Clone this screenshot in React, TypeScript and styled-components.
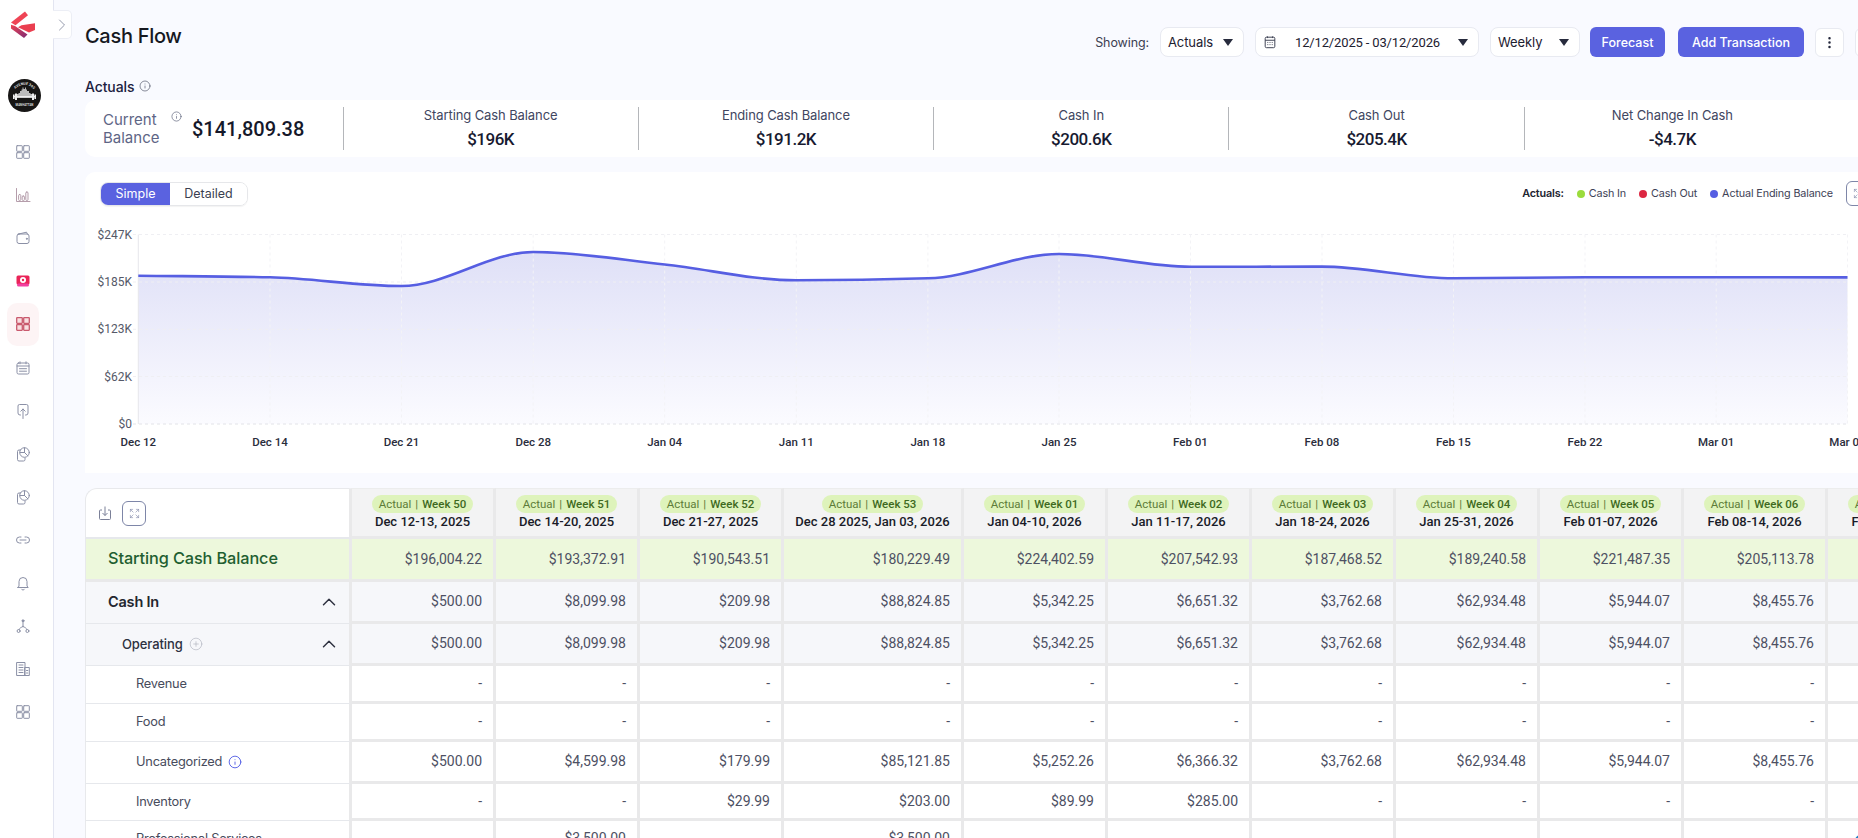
import React from "react";
import styled, { createGlobalStyle } from "styled-components";
import { ChevronRight, ChevronUp, Expand, Info, CirclePlus, EllipsisVertical } from "lucide-react";

const Global = createGlobalStyle`
  html, body { margin: 0; padding: 0; height: 100%; overflow: hidden; background: #f9faff; }
  * { box-sizing: border-box; }
  body { font-family: Inter, "Liberation Sans", sans-serif; color: #1a1d2e; }
`;
const NUM = `Roboto, Inter, sans-serif`;

const Shell = styled.div`
  position: relative; display: flex; width: 1858px; height: 838px; overflow: hidden;
`;
const Side = styled.aside`
  flex: 0 0 54px; height: 100%; background: #fff; border-right: 1px solid #e3e5f1;
  display: flex; flex-direction: column; align-items: center; padding-left: 0;
`;
const LogoBox = styled.div`
  width: 53px; height: 79px; flex: none;
`;
const AvatarBox = styled.div`
  width: 53px; height: 51.5px; flex: none; display: flex; justify-content: flex-start; padding-left: 8px;
`;
const NavList = styled.nav`
  display: flex; flex-direction: column; width: 100%; margin-top: 0;
`;
const NavItem = styled.div<{ $active?: boolean }>`
  width: 32px; height: 43.1px; flex: none; margin-left: 7px; display: flex; align-items: center; justify-content: center;
  border-radius: 10px; background: ${(p) => (p.$active ? "#fdf4f5" : "transparent")};
`;
const Toggle = styled.div`
  position: absolute; left: 53px; top: 10px; width: 19px; height: 29px; background: #fff;
  border: 1px solid #eceef5; border-left: none; border-radius: 0 5px 5px 0;
  display: flex; align-items: center; justify-content: center; color: #8a8fa3;
  svg { flex: none; }
`;
const Main = styled.main`
  flex: none; width: 1830px; padding-left: 31px; display: flex; flex-direction: column;
  & > * { flex: none; }
`;
const Header = styled.header`
  display: flex; justify-content: space-between; align-items: flex-start; padding-top: 27px; width: 1799px;
`;
const Title = styled.h1`
  margin: 0; font-size: 20px; line-height: 18px; font-weight: 500; letter-spacing: -0.3px; color: #16181f;
`;
const Tools = styled.div`
  display: flex; align-items: center; gap: 11px;
`;
const ShowLabel = styled.span`
  font-size: 12.5px; color: #3c4052; letter-spacing: -0.1px;
`;
const Select = styled.div<{ $w: number }>`
  width: ${(p) => p.$w}px; height: 30px; background: #fff; border: 1px solid #e8eaf1; border-radius: 8px;
  display: flex; align-items: center; justify-content: space-between; padding: 0 10px 0 7px;
  font-size: 13px; color: #1d2030; letter-spacing: -0.1px;
`;
const DateText = styled.span`
  font-family: ${NUM}; font-size: 13px; letter-spacing: -0.15px;
`;
const Caret = styled.i`
  display: block; width: 0; height: 0; border-left: 5.5px solid transparent; border-right: 5.5px solid transparent;
  border-top: 7px solid #272b3d;
`;
const Primary = styled.button<{ $w: number; $tweak?: boolean }>`
  width: ${(p) => p.$w}px; height: 30px; border: none; border-radius: 6px; background: #5a62e0; color: #fff;
  font: 500 12.5px Inter, sans-serif; padding: 0;
  margin: ${(p) => (p.$tweak ? "0 2px 0 -1px" : "0")};
`;
const IconBtn = styled.div`
  width: 29px; height: 29px; background: #fff; border: 1px solid #e8eaf1; border-radius: 6px;
  display: flex; align-items: center; justify-content: center; color: #22263a;
`;
const SectionLabel = styled.div`
  display: flex; align-items: center; gap: 5px; height: 20px; margin-top: 19px; margin-bottom: 4px;
  font-size: 14px; font-weight: 500; color: #1c2140; letter-spacing: -0.1px;
`;
const Summary = styled.section`
  display: flex; align-items: center; height: 57px; width: 1799px; background: #fff; border-radius: 10px;
`;
const CurrentCell = styled.div`
  flex: 0 0 258.5px; height: 43px; display: flex; align-items: center; padding-left: 18px;
  border-right: 1px solid #b4b6ba;
`;
const CurrentLabel = styled.div`
  width: 68px; font-size: 15px; line-height: 18px; color: #5e6585;
`;
const CurrentInfo = styled.div`
  align-self: flex-start; margin-top: 4px; width: 21px; color: #555b74; display: flex;
`;
const CurrentValue = styled.div`
  font-family: ${NUM}; font-size: 20px; font-weight: 500; color: #15182a;
`;
const StatCell = styled.div<{ $last?: boolean }>`
  flex: 0 0 295.3px; height: 43px; display: flex; flex-direction: column; align-items: center;
  border-right: ${(p) => (p.$last ? "none" : "1px solid #b4b6ba")};
`;
const StatLabel = styled.div`
  font-size: 13px; line-height: 16px; margin-top: 0; color: #41465f; letter-spacing: -0.1px;
`;
const StatValue = styled.div`
  font-family: ${NUM}; font-size: 17px; font-weight: 500; line-height: 20px; margin-top: 6px; color: #171a30;
  letter-spacing: -0.5px;
`;
const ChartCard = styled.section`
  margin-top: 15px; width: 1799px; height: 301px; background: #fff; border-radius: 10px 0 0 0;
  display: flex; flex-direction: column;
`;
const ChartTop = styled.div`
  display: flex; justify-content: space-between; align-items: center; height: 24px; margin-top: 9.5px;
  padding: 0 14px 0 15px; flex: none;
`;
const Segment = styled.div`
  display: flex; height: 24px; width: 148px; border: 1px solid #e6e7ea; border-radius: 8px; overflow: hidden;
  box-shadow: 0 1px 1px rgba(0,0,0,.05);
`;
const SegBtn = styled.div<{ $on?: boolean; $w: number }>`
  width: ${(p) => p.$w}px; display: flex; align-items: center; justify-content: center; font-size: 12.5px;
  background: ${(p) => (p.$on ? "#5a62e0" : "#fff")}; color: ${(p) => (p.$on ? "#fff" : "#3b3f50")};
`;
const Legend = styled.div`
  display: flex; align-items: center; font-size: 10.8px; color: #3e4256; letter-spacing: -0.15px;
`;
const LegendTitle = styled.span`
  font-weight: 600; color: #20232f; margin-right: 13px;
`;
const LegendItem = styled.span<{ $c: string }>`
  display: flex; align-items: center; margin-right: 13px;
  &::before { content: ""; width: 8px; height: 8px; border-radius: 50%; background: ${(p) => p.$c}; margin-right: 4px; }
`;
const OutlineBtn = styled.div`
  width: 24px; height: 25px; border: 1px solid #7e86a8; border-radius: 6px; display: flex; align-items: center;
  justify-content: center; color: #7e86a8; background: #fff; flex: none;
`;
const ChartSvg = styled.svg`
  display: block; margin-top: 19.5px; flex: none;
`;
const Table = styled.section`
  margin-top: 15px; width: 1900px; display: flex; flex-direction: column;
`;
const Row = styled.div<{ $h: number }>`
  display: flex; height: ${(p) => p.$h}px; flex: none;
`;
type Kind = "head" | "start" | "group" | "plain";
const labelBg = { head: "#fff", start: "#edf8dc", group: "#f6f7fa", plain: "#fff" };
const valueBg = { head: "#f3f3f4", start: "#edf8dc", group: "#f6f7fa", plain: "#fff" };
const Label = styled.div<{ $kind: Kind }>`
  flex: 0 0 267px; display: flex; align-items: center; background: ${(p) => labelBg[p.$kind]};
  border-left: 1px solid #e8e9ec; border-right: 3px solid #e9e9ea;
  border-bottom: ${(p) => (p.$kind === "start" ? "3px solid #e9e9ea" : "1px solid #e6e8ec")};
  ${(p) => p.$kind === "head" && "border-top: 1px solid #e8e9ec; border-top-left-radius: 12px; border-bottom-width: 2px; padding-left: 11px; gap: 9px;"}
  ${(p) => p.$kind !== "head" && "padding-bottom: 2px;"}
`;
const LabelText = styled.span<{ $lvl: number }>`
  padding-left: ${(p) => 22 + p.$lvl * 14}px; display: flex; align-items: center; gap: 6px; flex: 1;
  ${(p) =>
    p.$lvl === 0
      ? "font-size: 14.5px; font-weight: 600; color: #23262f; letter-spacing: -0.2px;"
      : p.$lvl === 1
      ? "font-size: 13px; font-weight: 500; color: #2c3040; letter-spacing: -0.1px;"
      : "font-size: 12.8px; color: #474b5c; letter-spacing: -0.22px;"}
`;
const StartText = styled.span`
  padding-left: 22px; font-size: 16.3px; font-weight: 500; color: #1f5f31; letter-spacing: -0.1px;
`;
const Chevron = styled.span`
  margin-right: 9px; display: flex; color: #2e3140;
`;
const Cell = styled.div<{ $kind: Kind; $wide?: boolean }>`
  flex: 0 0 ${(p) => (p.$wide ? 180 : 144)}px; display: flex; align-items: center; justify-content: flex-end;
  padding: 0 11px 1px 0; background: ${(p) => valueBg[p.$kind]};
  border-right: 3px solid #e9e9ea; border-bottom: 3px solid #e9e9ea;
  font-family: ${NUM}; font-size: 14px; color: #4d5063;
`;
const HeadCell = styled.div<{ $wide?: boolean }>`
  flex: 0 0 ${(p) => (p.$wide ? 180 : 144)}px; display: flex; flex-direction: column; align-items: center;
  padding-top: 6px; background: #f3f3f4; border-right: 3px solid #e9e9ea; border-bottom: 3px solid #e9e9ea;
  border-top: 1px solid #eceded;
`;
const Pill = styled.div`
  height: 18px; padding: 0 7px; border-radius: 9px; background: #def3bb; color: #5d7c38; font-family: ${NUM};
  font-size: 11.5px; display: flex; align-items: center; gap: 4px; white-space: nowrap;
  b { font-weight: 500; color: #3e6a1f; }
`;
const DateHead = styled.div`
  margin-top: 1px; font-family: ${NUM}; font-size: 13px; font-weight: 500; color: #191b28; white-space: nowrap;
`;
const Widget = styled.div`
  position: absolute; left: 1844px; top: 826px; width: 80px; height: 80px; border-radius: 50%;
  background: #1b7fc4; box-shadow: 0 0 12px rgba(255,255,255,.9);
`;

const S = { fill: "none", stroke: "#8b90a6", strokeWidth: 1, strokeLinecap: "round" as const, strokeLinejoin: "round" as const };
const Ico: React.FC<{ children: React.ReactNode; st?: any }> = ({ children, st }) => (
  <svg width="16" height="16" viewBox="0 0 16 16" {...S} {...st}>{children}</svg>
);
const grid = (
  <>
    <rect x="1.7" y="1.7" width="5.6" height="5.6" rx=".5" /><rect x="8.7" y="1.7" width="5.6" height="5.6" rx=".5" />
    <rect x="1.7" y="8.7" width="5.6" height="5.6" rx=".5" /><rect x="8.7" y="8.7" width="5.6" height="5.6" rx=".5" />
  </>
);
const filesIcon = (
  <Ico>
    <path d="M5.5 4H4A1.5 1.5 0 0 0 2.5 5.5v8A1.5 1.5 0 0 0 4 15h4.5A1.5 1.5 0 0 0 10 13.5V12" />
    <circle cx="9.5" cy="6.5" r="4.8" /><path d="M9.5 6.5V1.7M9.5 6.5l3.4 3.4M9.5 6.5H5" />
  </Ico>
);
const navIcons: React.ReactNode[] = [
  <Ico>{grid}</Ico>,
  <Ico st={{ stroke: "#b59dab" }}>
    <path d="M1.5 1.5V14.5H15" /><rect x="3.6" y="7.5" width="2.2" height="6" rx="1" /><rect x="7.2" y="9" width="2.2" height="4.5" rx="1" /><rect x="10.8" y="5" width="2.2" height="8.5" rx="1" />
  </Ico>,
  <Ico>
    <rect x="2" y="4" width="12" height="9.5" rx="2" /><path d="M3 4.2 11.5 2.2 12.5 4.2" /><circle cx="11.8" cy="8.8" r=".5" fill="#8b90a6" />
  </Ico>,
  <svg width="16" height="16" viewBox="0 0 16 16">
    <rect x="1.5" y="2.5" width="13" height="9" rx="1.5" fill="#ea2458" /><rect x="2" y="10.5" width="12" height="3" rx="1.5" fill="#f23fa0" />
    <circle cx="8" cy="7" r="3" fill="#fff" /><circle cx="8" cy="7" r="1.2" fill="#ea2458" />
  </svg>,
  <Ico st={{ stroke: "#c95a6e", strokeWidth: 1.3, fill: "#f8dfe1" }}>{grid}</Ico>,
  <Ico>
    <rect x="2" y="3" width="12" height="11" rx="1.5" /><path d="M5 1.8v2M11 1.8v2M2 6h12M4.5 8.7h7M4.5 11.2h7" />
  </Ico>,
  <Ico>
    <path d="M5.5 12H5a2 2 0 0 1-2-2V3a1.5 1.5 0 0 1 1.5-1.5h7A1.5 1.5 0 0 1 13 3v7a2 2 0 0 1-2 2h-.5" /><path d="M8 15.5V6M5.8 8.2 8 6l2.2 2.2" />
  </Ico>,
  filesIcon,
  filesIcon,
  <Ico>
    <path d="M6 5H4.5a3 3 0 0 0 0 6H6M10 5h1.5a3 3 0 0 1 0 6H10M5 8h6" />
  </Ico>,
  <Ico>
    <path d="M4 11V6.5a4 4 0 0 1 8 0V11l1.2 1.5H2.8Z" /><path d="M6.6 14.2a1.6 1.6 0 0 0 2.8 0" />
  </Ico>,
  <Ico>
    <circle cx="8" cy="2.8" r="1" fill="#8b90a6" /><circle cx="3.6" cy="13" r="1.5" /><circle cx="12.4" cy="13" r="1.5" /><path d="M8 3.5V8.5M8 8.5C6 9.5 4.5 10 4 11.6M8 8.5c2 1 3.5 1.5 4 3.1" />
  </Ico>,
  <Ico>
    <rect x="2" y="1.5" width="8" height="13" /><rect x="10" y="6.5" width="4.3" height="8" />
    <path d="M4 4h4M4 6.5h4M4 9h4M4 11.5h4M11.5 9.5h1.3M11.5 12h1.3" />
  </Ico>,
  <Ico>{grid}</Ico>,
];

const Logo = () => (
  <svg width="53" height="79" viewBox="0 0 53 79">
    <defs>
      <linearGradient id="lg" x1="0" y1="0" x2="1" y2="1"><stop offset="0" stopColor="#ee4353" /><stop offset="1" stopColor="#7d2a74" /></linearGradient>
    </defs>
    <polygon points="25,11.5 28,15.2 15.5,25.2 11,22.4" fill="#ef4455" />
    <polygon points="35,23.2 35,30 29,32.6 18,27.2 21.5,25.2" fill="#ea3f50" />
    <polygon points="11,24.8 15,26 27.5,34.4 24,37.9 11,28.6" fill="url(#lg)" />
  </svg>
);
const Avatar = () => (
  <svg width="33" height="33" viewBox="0 0 33 33">
    <circle cx="16.5" cy="16.5" r="16.5" fill="#171615" />
    <defs>
      <path id="arcT" d="M5 15 A11.8 11.8 0 0 1 28 15" />
    </defs>
    <text fontFamily="Roboto, sans-serif" fontSize="3.6" fontWeight="700" fill="#ddd"><textPath href="#arcT" startOffset="50%" textAnchor="middle">AVENUE 365</textPath></text>
    <text x="16.5" y="27" textAnchor="middle" fontFamily="Roboto, sans-serif" fontSize="2.9" fontWeight="700" fill="#ddd">MANHATTAN</text>
    <path d="M9 19V15h1.5v-1H12v-2h1.5v-1.5h1v-2h1v1.5h1.5v-1.5h1v2h1V12H21v2h1.5v1h1.5v4Z" fill="#d8d8d8" opacity=".85" />
    <rect x="5" y="17" width="23" height="1.4" fill="#eee" /><rect x="7" y="14.5" width="2" height="6.5" fill="#eee" /><rect x="24" y="14.5" width="2" height="6.5" fill="#eee" /><rect x="5" y="15.5" width="1.6" height="4.5" fill="#eee" /><rect x="26.4" y="15.5" width="1.6" height="4.5" fill="#eee" />
  </svg>
);

const xs = [138.3, 270, 401.5, 533.2, 664.7, 796.3, 927.9, 1059, 1190.5, 1322, 1453.5, 1585, 1716.2, 1847.5];
const ys = [275.7, 277.3, 286, 252, 264.5, 280.3, 278.3, 254, 266.8, 266.6, 278.3, 277.3, 277.2, 277.4];
const xLabels = ["Dec 12", "Dec 14", "Dec 21", "Dec 28", "Jan 04", "Jan 11", "Jan 18", "Jan 25", "Feb 01", "Feb 08", "Feb 15", "Feb 22", "Mar 01", "Mar 08"];
const yTicks: [string, number][] = [["$247K", 234.5], ["$185K", 282], ["$123K", 329.3], ["$62K", 376.5], ["$0", 424]];

function monotone(x: number[], y: number[]) {
  const n = x.length;
  const d: number[] = [];
  for (let i = 0; i < n - 1; i++) d.push((y[i + 1] - y[i]) / (x[i + 1] - x[i]));
  const m: number[] = [d[0]];
  for (let i = 1; i < n - 1; i++) {
    if (d[i - 1] * d[i] <= 0) m.push(0);
    else {
      const h0 = x[i] - x[i - 1], h1 = x[i + 1] - x[i];
      const p = (d[i - 1] * h1 + d[i] * h0) / (h0 + h1);
      m.push((Math.sign(d[i - 1]) + Math.sign(d[i])) * Math.min(Math.abs(d[i - 1]), Math.abs(d[i]), 0.5 * Math.abs(p)));
    }
  }
  m.push(d[n - 2]);
  let s = `M${x[0]} ${y[0]}`;
  for (let i = 0; i < n - 1; i++) {
    const h = (x[i + 1] - x[i]) / 3;
    s += `C${x[i] + h} ${y[i] + m[i] * h} ${x[i + 1] - h} ${y[i + 1] - m[i + 1] * h} ${x[i + 1]} ${y[i + 1]}`;
  }
  return s;
}
const linePath = monotone(xs, ys);

const Chart = () => (
  <ChartSvg width="1799" height="230" viewBox="85 225 1799 230">
    <defs>
      <linearGradient id="area" x1="0" y1="252" x2="0" y2="424" gradientUnits="userSpaceOnUse">
        <stop offset="0" stopColor="#dfe0f7" /><stop offset="1" stopColor="#fbfbff" />
      </linearGradient>
    </defs>
    <path d={`${linePath}L1847.5 424L138.3 424Z`} fill="url(#area)" />
    {yTicks.map(([t, y], i) => (
      <g key={t}>
        <line x1="133" x2="1847.5" y1={y} y2={y} stroke={i === 4 ? "#e2e3e8" : "#efeff3"} strokeDasharray="3 3" />
        <text x="132" y={y + 4} textAnchor="end" fontFamily={NUM} fontSize="12" fill="#555968">{t}</text>
      </g>
    ))}
    {xs.map((x, i) => (
      <g key={x}>
        {i > 0 && <line x1={x} x2={x} y1="234.5" y2="424" stroke="#f3f3f6" strokeDasharray="3 3" />}
        <text x={x} y="446" textAnchor="middle" fontFamily={NUM} fontSize="11.5" fontWeight="500" fill="#2a2d3c">{xLabels[i]}</text>
      </g>
    ))}
    <line x1="138.3" x2="138.3" y1="234.5" y2="424" stroke="#e6e7ec" />
    <path d={linePath} fill="none" stroke="#565ee2" strokeWidth="2.6" />
  </ChartSvg>
);

const weeks = [
  ["50", "Dec 12-13, 2025"], ["51", "Dec 14-20, 2025"], ["52", "Dec 21-27, 2025"], ["53", "Dec 28 2025, Jan 03, 2026"],
  ["01", "Jan 04-10, 2026"], ["02", "Jan 11-17, 2026"], ["03", "Jan 18-24, 2026"], ["04", "Jan 25-31, 2026"],
  ["05", "Feb 01-07, 2026"], ["06", "Feb 08-14, 2026"], ["07", "Feb 15-21, 2026"],
];
const cashIn = ["$500.00", "$8,099.98", "$209.98", "$88,824.85", "$5,342.25", "$6,651.32", "$3,762.68", "$62,934.48", "$5,944.07", "$8,455.76", ""];
const dashes = Array(10).fill("-").concat("");
const rows: { h: number; kind: Kind; lvl: number; name: string; vals: string[]; chevron?: boolean; plus?: boolean; info?: boolean }[] = [
  { h: 42, kind: "group", lvl: 0, name: "Cash In", vals: cashIn, chevron: true },
  { h: 42, kind: "group", lvl: 1, name: "Operating", vals: cashIn, chevron: true, plus: true },
  { h: 38, kind: "plain", lvl: 2, name: "Revenue", vals: dashes },
  { h: 38, kind: "plain", lvl: 2, name: "Food", vals: dashes },
  { h: 42, kind: "plain", lvl: 2, name: "Uncategorized", info: true, vals: ["$500.00", "$4,599.98", "$179.99", "$85,121.85", "$5,252.26", "$6,366.32", "$3,762.68", "$62,934.48", "$5,944.07", "$8,455.76", ""] },
  { h: 37, kind: "plain", lvl: 2, name: "Inventory", vals: ["-", "-", "$29.99", "$203.00", "$89.99", "$285.00", "-", "-", "-", "-", ""] },
  { h: 38, kind: "plain", lvl: 2, name: "Professional Services", vals: ["-", "$3,500.00", "-", "$3,500.00", "-", "-", "-", "-", "-", "-", ""] },
];
const starts = ["$196,004.22", "$193,372.91", "$190,543.51", "$180,229.49", "$224,402.59", "$207,542.93", "$187,468.52", "$189,240.58", "$221,487.35", "$205,113.78", ""];
const stats = [
  ["Starting Cash Balance", "$196K"], ["Ending Cash Balance", "$191.2K"], ["Cash In", "$200.6K"], ["Cash Out", "$205.4K"], ["Net Change In Cash", "-$4.7K"],
];

export default function App() {
  return (
    <Shell>
      <Global />
      <Side>
        <LogoBox><Logo /></LogoBox>
        <AvatarBox><Avatar /></AvatarBox>
        <NavList>
          {navIcons.map((ic, i) => (
            <NavItem key={i} $active={i === 4}>{ic}</NavItem>
          ))}
        </NavList>
      </Side>
      <Toggle><ChevronRight size={20} strokeWidth={1.1} /></Toggle>
      <Main>
        <Header>
          <Title>Cash Flow</Title>
          <Tools>
            <ShowLabel>Showing:</ShowLabel>
            <Select $w={84}>Actuals<Caret /></Select>
            <Select $w={224}>
              <svg width="14" height="14" viewBox="0 0 16 16" fill="none" stroke="#3a3e50" strokeWidth="1.1">
                <rect x="2.5" y="2.5" width="11" height="12" rx="1.5" /><path d="M2.5 6h11M5 1.5v2M11 1.5v2M5 8.5h1M7.5 8.5h1M10 8.5h1M5 11h1M7.5 11h1M10 11h1" />
              </svg>
              <DateText>12/12/2025 - 03/12/2026</DateText>
              <Caret />
            </Select>
            <Select $w={90}>Weekly<Caret /></Select>
            <Primary $w={75} $tweak>Forecast</Primary>
            <Primary $w={126}>Add Transaction</Primary>
            <IconBtn><EllipsisVertical size={15} strokeWidth={2} /></IconBtn>
            <IconBtn />
          </Tools>
        </Header>
        <SectionLabel>Actuals <Info size={12} strokeWidth={1.3} color="#4a4f63" /></SectionLabel>
        <Summary>
          <CurrentCell>
            <CurrentLabel>Current Balance</CurrentLabel>
            <CurrentInfo><Info size={11} strokeWidth={1.4} /></CurrentInfo>
            <CurrentValue>$141,809.38</CurrentValue>
          </CurrentCell>
          {stats.map(([a, b], i) => (
            <StatCell key={a} $last={i === 4}>
              <StatLabel>{a}</StatLabel>
              <StatValue>{b}</StatValue>
            </StatCell>
          ))}
        </Summary>
        <ChartCard>
          <ChartTop>
            <Segment>
              <SegBtn $on $w={69}>Simple</SegBtn>
              <SegBtn $w={77}>Detailed</SegBtn>
            </Segment>
            <Legend>
              <LegendTitle>Actuals:</LegendTitle>
              <LegendItem $c="#9bdc3c">Cash In</LegendItem>
              <LegendItem $c="#dc2742">Cash Out</LegendItem>
              <LegendItem $c="#565ee2">Actual Ending Balance</LegendItem>
              <OutlineBtn><Expand size={11} strokeWidth={1.3} /></OutlineBtn>
            </Legend>
          </ChartTop>
          <Chart />
        </ChartCard>
        <Table>
          <Row $h={51}>
            <Label $kind="head">
              <svg width="16" height="16" viewBox="0 0 16 16" fill="none" stroke="#7b8098" strokeWidth="1">
                <path d="M5 5H3.5A1 1 0 0 0 2.5 6v7.5a1 1 0 0 0 1 1h9a1 1 0 0 0 1-1V6a1 1 0 0 0-1-1H11M8 1.5v9M5.5 8 8 10.5 10.5 8" />
              </svg>
              <OutlineBtn><Expand size={11} strokeWidth={1.3} /></OutlineBtn>
            </Label>
            {weeks.map(([w, d], i) => (
              <HeadCell key={w} $wide={i === 3}>
                <Pill>Actual <span>|</span> <b>Week {w}</b></Pill>
                <DateHead>{d}</DateHead>
              </HeadCell>
            ))}
          </Row>
          <Row $h={43}>
            <Label $kind="start"><StartText>Starting Cash Balance</StartText></Label>
            {starts.map((v, i) => (
              <Cell key={i} $kind="start" $wide={i === 3}>{v}</Cell>
            ))}
          </Row>
          {rows.map((r) => (
            <Row key={r.name} $h={r.h}>
              <Label $kind={r.kind}>
                <LabelText $lvl={r.lvl}>
                  {r.name}
                  {r.plus && <CirclePlus size={14} strokeWidth={1} color="#a9adb8" />}
                  {r.info && <Info size={14} strokeWidth={1.5} color="#4a56e2" />}
                </LabelText>
                {r.chevron && <Chevron><ChevronUp size={22} strokeWidth={1.6} /></Chevron>}
              </Label>
              {r.vals.map((v, i) => (
                <Cell key={i} $kind={r.kind} $wide={i === 3}>{v}</Cell>
              ))}
            </Row>
          ))}
        </Table>
      </Main>
      <Widget />
    </Shell>
  );
}
